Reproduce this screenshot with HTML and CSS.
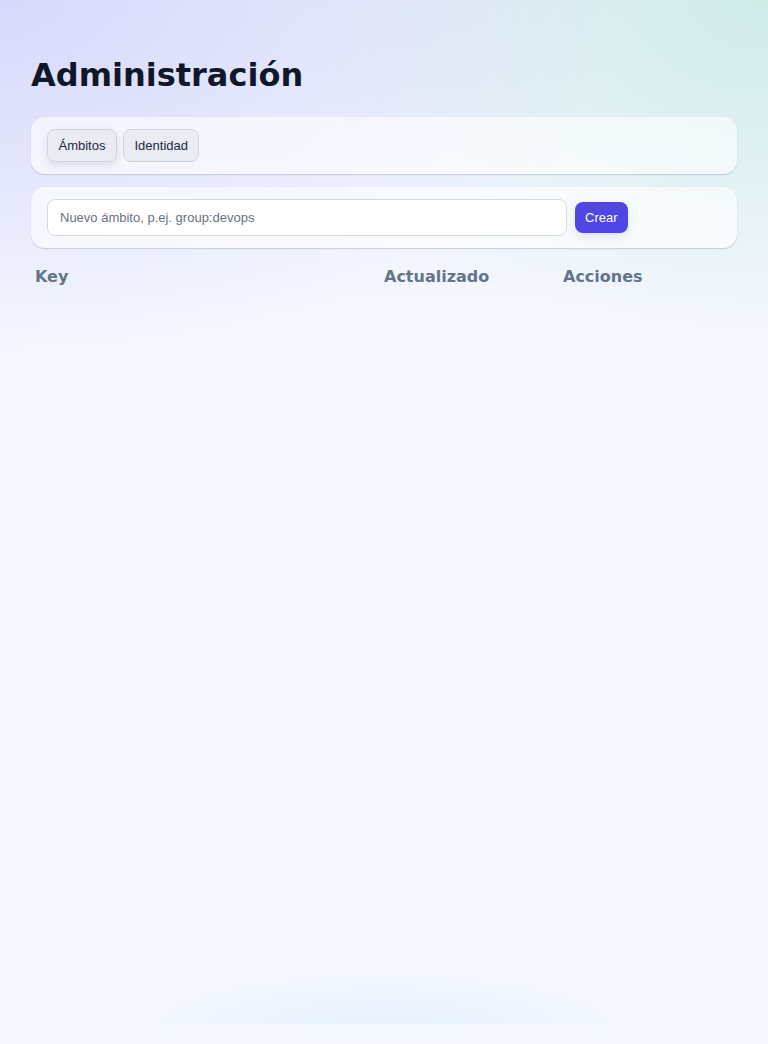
FILE: index.html
```html
<!DOCTYPE html>
<html lang="es">
<head>
<meta charset="utf-8">
<title>Administración</title>
<link rel="stylesheet" href="styles.css">
</head>
<body>
<div class="bg-glow"></div>
<main class="page">
  <h1 class="title">Administración</h1>
  <section class="panel tabs">
    <button class="btn tab active">Ámbitos</button>
    <button class="btn tab">Identidad</button>
  </section>
  <section class="panel create">
    <input class="field" type="text" placeholder="Nuevo ámbito, p.ej. group:devops">
    <button class="btn primary">Crear</button>
  </section>
  <table class="list">
    <thead>
      <tr>
        <th class="c-key">Key</th>
        <th class="c-upd">Actualizado</th>
        <th class="c-act">Acciones</th>
      </tr>
    </thead>
    <tbody></tbody>
  </table>
</main>
</body>
</html>
```
FILE: styles.css
```css
html, body {
  margin: 0;
  padding: 0;
}
body {
  min-height: 1044px;
  background-color: #f5f8ff;
  background-image:
    radial-gradient(ellipse 620px 360px at 0% 0%, rgba(203, 205, 250, 0.65), rgba(203, 205, 250, 0) 100%),
    radial-gradient(ellipse 480px 340px at 100% 0%, rgba(196, 236, 224, 0.7), rgba(196, 236, 224, 0) 100%),
    linear-gradient(180deg, rgba(232, 234, 252, 0.6) 0px, rgba(245, 248, 255, 0) 330px);
  font-family: "DejaVu Sans", sans-serif;
  position: relative;
  overflow: hidden;
}
.bg-glow {
  position: absolute;
  left: 0;
  right: 0;
  top: 0;
  height: 1024px;
  background: radial-gradient(ellipse 260px 55px at 50% 100%, rgba(228, 240, 255, 0.85), rgba(228, 240, 255, 0) 100%);
  pointer-events: none;
}
.page {
  position: relative;
  padding: 53px 31px 0 31px;
  display: flex;
  flex-direction: column;
}
.title {
  margin: 0 0 20px 0;
  font-size: 32px;
  font-weight: 700;
  line-height: 44px;
  color: #0f172a;
}
.panel {
  background: rgba(255, 255, 255, 0.62);
  border-radius: 14px;
  box-shadow: 0 1px 2px rgba(100, 116, 139, 0.2), 0 1px 0 rgba(203, 213, 225, 0.5);
  padding: 12px 16px;
  display: flex;
  align-items: center;
  gap: 6px;
}
.create {
  margin-top: 13px;
  gap: 8px;
}
.btn {
  font-family: "Liberation Sans", Arial, sans-serif;
  font-size: 13px;
  line-height: 15px;
  border-radius: 8px;
  cursor: pointer;
}
.tab {
  height: 33px;
  padding: 0 10.5px;
  background: #e9ecf2;
  border: 1px solid #cfd5df;
  color: #1e293b;
}
.tab.active {
  box-shadow: 0 4px 10px rgba(100, 116, 139, 0.18);
}
.field {
  width: 520px;
  height: 37px;
  box-sizing: border-box;
  border: 1px solid #d5dae2;
  border-radius: 8px;
  background: #ffffff;
  padding: 0 12px;
  font-family: "Liberation Sans", Arial, sans-serif;
  font-size: 13px;
  color: #1e293b;
}
.field::placeholder {
  color: #6b7280;
}
.primary {
  height: 31px;
  padding: 0 10px;
  background: #4f46e5;
  border: none;
  color: #ffffff;
  box-shadow: 0 4px 10px rgba(100, 116, 139, 0.15);
}
.list {
  margin-top: 13px;
  width: 706px;
  border-collapse: collapse;
  table-layout: fixed;
}
.list th {
  text-align: left;
  font-size: 16px;
  font-weight: 700;
  color: #64748b;
  padding: 6px 4px;
  line-height: 19px;
}
.c-key { width: 341px; }
.c-upd { width: 171px; }
.c-act { width: 170px; }
```
